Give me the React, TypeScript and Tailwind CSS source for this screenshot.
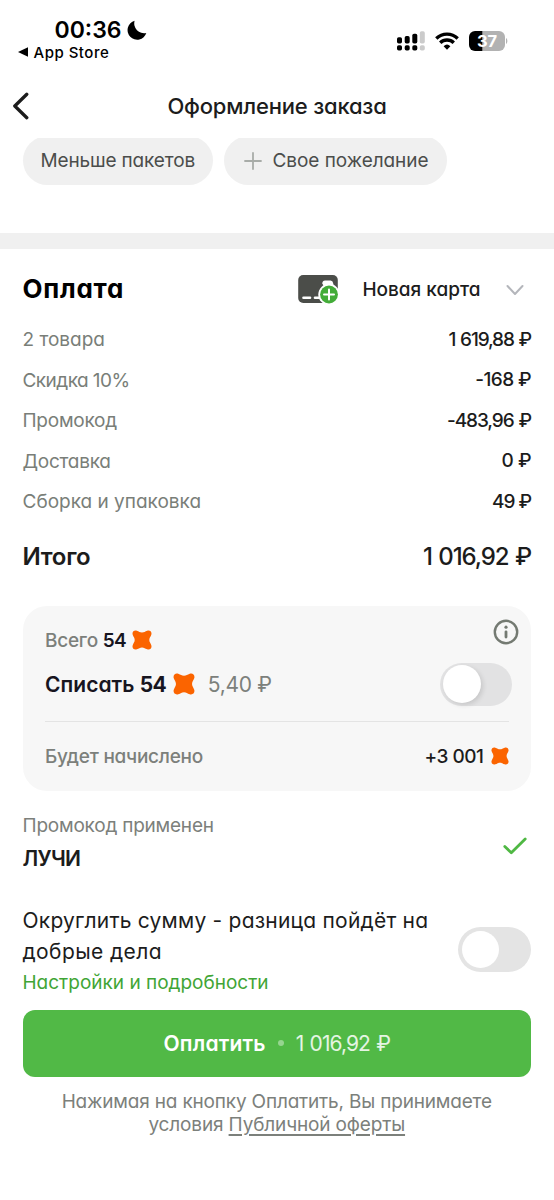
import type { ReactNode } from 'react';

type TextProps = { className?: string; children: ReactNode };

function Text({ className = '', children }: TextProps) {
  return <span className={`whitespace-pre ${className}`}>{children}</span>;
}

function Star({ className = '' }: { className?: string }) {
  return (
    <svg viewBox="0 0 20 20" className={`shrink-0 ${className}`} fill="#fb6400">
      <path d="M0.7 4.8C-0.2 2 2 -0.2 4.8 0.7C7 1.400 7.800 2.500 10 2.500S13 1.400 15.200 0.700C18 -0.200 20.200 2 19.300 4.800C18.600 7 17.300 7.800 17.300 10S18.600 13 19.300 15.200C20.200 18 18 20.200 15.200 19.300C13 18.600 12.200 17.400 10 17.400S7 18.600 4.800 19.300C2 20.200 -0.200 18 0.700 15.200C1.400 13 2.700 12.200 2.700 10S1.400 7 0.700 4.800Z" />
    </svg>
  );
}

function StatusBar() {
  return (
    <header className="flex h-[81px] items-start justify-between">
      <div className="flex flex-col pt-[18px] pl-[18px]">
        <div className="flex h-[25px] items-center pl-[36.5px] text-[23px] leading-none font-semibold text-black">
          <Text>00:36</Text>
          <svg viewBox="0 0 20 20" className="mb-[2px] ml-[5px] size-[20px]" fill="#000">
            <path d="M7.6 0.8A9.6 9.6 0 1 0 19.3 13A9.800 9.800 0 0 1 7.600 0.800Z" />
          </svg>
        </div>
        <div className="flex h-[18px] items-center text-[15px] leading-none font-medium text-black">
          <svg viewBox="0 0 10 10" className="mr-[5.5px] size-[10px]">
            <path d="M0 5L10 0.3V9.7Z" />
          </svg>
          <Text className="tracking-[0.5px]">App Store</Text>
        </div>
      </div>
      <div className="flex items-center pt-[31px] pr-[46px]">
        <svg viewBox="0 0 28 20" className="h-[20px] w-[28px]">
          <g fill="#000">
            <rect x="0" y="6.3" width="5" height="6.2" rx="1.7" />
            <rect x="7.7" y="5" width="5" height="7.5" rx="1.7" />
            <rect x="15.3" y="2.7" width="5" height="9.8" rx="1.7" />
            <rect x="0" y="14.3" width="5" height="5.2" rx="1.7" />
            <rect x="7.7" y="14.3" width="5" height="5.2" rx="1.7" />
            <rect x="15.3" y="14.3" width="5" height="5.2" rx="1.7" />
          </g>
          <g fill="#cbcbcb">
            <rect x="22.8" y="0.3" width="5" height="12.2" rx="1.7" />
            <rect x="22.8" y="14.3" width="5" height="5.2" rx="1.7" />
          </g>
        </svg>
        <svg viewBox="0 0 24 18" className="ml-[10px] h-[18px] w-[24px]" fill="none" stroke="#000" strokeWidth="3.4">
          <path d="M1.3 6.4A15.5 15.5 0 0 1 22.7 6.4" />
          <path d="M5.2 10.7A9.8 9.8 0 0 1 18.8 10.7" />
          <path d="M8.6 14.2A5 5 0 0 1 15.4 14.2L12 17.7Z" fill="#000" stroke="none" />
        </svg>
        <svg viewBox="0 0 39 20" className="ml-[10px] h-[20px] w-[39px]">
          <path d="M6 0H13.6V20H6A6 6 0 0 1 0 14V6A6 6 0 0 1 6 0Z" fill="#000" />
          <path d="M13.6 0H30A6 6 0 0 1 36 6V14A6 6 0 0 1 30 20H13.6Z" fill="#b2b2b2" />
          <path d="M37 7C38.8 8 38.8 12 37 13Z" fill="#b2b2b2" />
          <text x="18" y="15.8" textAnchor="middle" fill="#fff" fontSize="16.5" fontWeight="700">37</text>
        </svg>
      </div>
    </header>
  );
}

function TitleBar() {
  return (
    <div className="grid h-[56.5px] grid-cols-[40px_1fr_40px] items-center pb-[6px]">
      <svg viewBox="0 0 18 28" className="ml-[12px] h-[28px] w-[18px]" fill="none" stroke="#1c1c1c" strokeWidth="3.3" strokeLinecap="round" strokeLinejoin="round">
        <path d="M14.8 2.3L2.8 14L14.8 25.7" />
      </svg>
      <h1 className="text-center text-[22px] leading-none font-medium text-[#1c1c1c]">
        <Text className="tracking-[-0.2px]">Оформление заказа</Text>
      </h1>
    </div>
  );
}

function Wishes() {
  return (
    <div className="h-[95px] overflow-hidden">
      <div className="mt-[-1.5px] flex gap-[11px] pl-[22.5px] text-[19px] leading-none text-[#4b4d4b]">
        <div className="flex h-[49px] w-[190.5px] items-center justify-center rounded-full bg-[#f0f0f0]">
          <Text className="tracking-[-0.15px]">Меньше пакетов</Text>
        </div>
        <div className="flex h-[49px] w-[223px] items-center rounded-full bg-[#f0f0f0] pl-[20px]">
          <svg viewBox="0 0 18 18" className="mr-[10.5px] size-[18px]" stroke="#a8aca8" strokeWidth="1.8" strokeLinecap="round">
            <path d="M9 1V17M1 9H17" />
          </svg>
          <Text className="tracking-[-0.05px]">Свое пожелание</Text>
        </div>
      </div>
    </div>
  );
}

function PaymentHeader() {
  return (
    <div className="flex h-[80px] items-center">
      <h2 className="flex-1 text-[26px] leading-none font-bold text-black">
        <Text className="tracking-[0.75px]">Оплата</Text>
      </h2>
      <svg viewBox="0 0 42 30" className="h-[30px] w-[42px]">
        <rect x="1.2" y="1" width="39.6" height="28" rx="5" fill="#4b4d49" />
        <path d="M6.5 23.8H13" stroke="#fff" strokeWidth="2.6" strokeLinecap="round" />
        <path d="M18 23.8H23" stroke="#fff" strokeWidth="2.6" strokeLinecap="round" />
        <path d="M25.2 9.500Q25.500 6.500 28 6.500H33.500Q35.800 6.500 36.100 9L36.600 11.500L28 14Z" fill="#fff" />
        <circle cx="32" cy="20.5" r="10.7" fill="#fff" />
        <circle cx="32" cy="20.5" r="8.9" fill="#43ac38" />
        <path d="M32 15.5V25.5M27 20.5H37" stroke="#fff" strokeWidth="2" strokeLinecap="round" />
      </svg>
      <Text className="ml-[23px] text-[19px] leading-none font-medium text-[#1c1c1c]">Новая карта</Text>
      <svg viewBox="0 0 18 12" className="mt-[2px] mr-[7.5px] ml-[25px] h-[12px] w-[18px]" fill="none" stroke="#b4b6bb" strokeWidth="2" strokeLinecap="round" strokeLinejoin="round">
        <path d="M1.5 2L9 10L16.5 2" />
      </svg>
    </div>
  );
}

const lines = [
  { label: '2 товара', labelClass: '', value: '1 619,88 ₽', valueClass: 'tracking-[-1.15px] [word-spacing:0.9px]' },
  { label: 'Скидка 10%', labelClass: 'tracking-[-0.55px]', value: '-168 ₽', valueClass: 'tracking-[-0.6px]' },
  { label: 'Промокод', labelClass: 'tracking-[-0.25px]', value: '-483,96 ₽', valueClass: 'tracking-[-1.1px] [word-spacing:1px]' },
  { label: 'Доставка', labelClass: 'tracking-[-0.25px]', value: '0 ₽', valueClass: 'tracking-[-0.5px]' },
  { label: 'Сборка и упаковка', labelClass: '', value: '49 ₽', valueClass: 'tracking-[-1px]' },
];

function Summary() {
  return (
    <>
      <dl className="text-[19px] leading-none">
        {lines.map((line) => (
          <div key={line.label} className="flex h-[40.5px] items-center justify-between">
            <dt className="text-[#797e78]">
              <Text className={line.labelClass}>{line.label}</Text>
            </dt>
            <dd className="pb-px font-medium text-[#1c1c1c]">
              <Text className={line.valueClass}>{line.value}</Text>
            </dd>
          </div>
        ))}
      </dl>
      <div className="flex h-[83.5px] items-center justify-between pb-[13px] text-[24px] leading-none text-[#1c1c1c]">
        <Text className="font-semibold tracking-[-0.3px]">Итого</Text>
        <Text className="font-medium tracking-[-1.1px] [word-spacing:1.2px]">1 016,92 ₽</Text>
      </div>
    </>
  );
}

function Bonuses() {
  return (
    <section className="flex h-[185px] flex-col rounded-[24px] bg-[#f7f7f7] pl-[22.5px]">
      <div className="flex h-[57px] items-center justify-between pt-[11px] pr-[12.5px] text-[19px] leading-none">
        <div className="flex items-center pt-[2px]">
          <Text className="font-medium tracking-[-0.25px] text-[#7c807b]">Всего </Text>
          <Text className="font-semibold tracking-[-0.5px] text-[#17151f]">54</Text>
          <Star className="mb-px ml-[5.5px] size-[20px]" />
        </div>
        <svg viewBox="0 0 26 26" className="mb-[16px] size-[26px]" fill="none" stroke="#747a72" strokeWidth="2.4">
          <circle cx="13" cy="13" r="11.2" />
          <path d="M13 12.8V18" strokeWidth="2.8" strokeLinecap="round" />
          <circle cx="13" cy="8.2" r="1.6" fill="#747a72" stroke="none" />
        </svg>
      </div>
      <div className="mr-[22px] flex h-[59px] items-center border-b border-[#e4e4e4] pb-[14px] text-[21px] leading-none">
        <Text className="font-semibold tracking-[0.05px] text-[#17151f]">Списать </Text>
        <Text className="font-bold tracking-[-0.8px] text-[#17151f]">54</Text>
        <Star className="mb-px ml-[7px] size-[22px]" />
        <Text className="ml-[13px] tracking-[-0.3px] text-[#7c807b]">5,40 ₽</Text>
        <div className="mr-[-3px] mb-px ml-auto flex h-[43px] w-[72px] shrink-0 items-center rounded-full bg-[#e2e2e3] pl-[2.5px]">
          <div className="size-[38px] rounded-full bg-white shadow-[2px_2px_5px_rgba(0,0,0,0.12)]" />
        </div>
      </div>
      <div className="mr-[22px] flex h-[69px] items-center pt-px text-[19px] leading-none font-medium">
        <Text className="flex-1 tracking-[-0.25px] text-[#7c807b]">Будет начислено</Text>
        <Text className="tracking-[-0.5px] text-[#1c1c1c]">+3 001</Text>
        <Star className="mr-[0.5px] mb-px ml-[7px] size-[18px]" />
      </div>
    </section>
  );
}

function Promo() {
  return (
    <div className="flex h-[112px] items-start justify-between pt-[18px] leading-none">
      <div className="flex flex-col pt-[0.5px]">
        <div className="flex h-[33px] items-center text-[19px] text-[#7c807b]">
          <Text className="tracking-[-0.22px]">Промокод применен</Text>
        </div>
        <div className="flex h-[33px] items-center text-[21px] font-semibold text-[#1c1c1c]">
          <Text className="tracking-[-0.7px]">ЛУЧИ</Text>
        </div>
      </div>
      <svg viewBox="0 0 24 18" className="mt-[28px] mr-[4.5px] h-[18px] w-[24px]" fill="none" stroke="#4fb843" strokeWidth="2.8" strokeLinecap="round" strokeLinejoin="round">
        <path d="M1.8 9.5L8.3 15.8L22.2 2" />
      </svg>
    </div>
  );
}

function RoundUp() {
  return (
    <div className="flex h-[107px] justify-between">
      <div className="flex flex-col pt-px text-[21px] leading-none text-[#1c1c1c]">
        <div className="flex h-[32px] items-center pt-[2px]">
          <Text className="tracking-[0.22px]">Округлить сумму - разница пойдёт на</Text>
        </div>
        <div className="flex h-[32px] items-center">
          <Text className="tracking-[0.4px]">добрые дела</Text>
        </div>
        <div className="flex h-[30px] items-center text-[19px] text-[#3fa535]">
          <Text>Настройки и подробности</Text>
        </div>
      </div>
      <div className="mt-[24px] flex h-[45px] w-[73px] shrink-0 items-center rounded-full bg-[#e4e4e4] pl-[4px]">
        <div className="size-[37px] rounded-full bg-white" />
      </div>
    </div>
  );
}

function PayFooter() {
  return (
    <>
      <button className="flex h-[67.5px] w-full items-center justify-center rounded-[12px] bg-[#51b946] text-[21px] leading-none text-white">
        <Text className="font-semibold tracking-[0.2px]">Оплатить</Text>
        <span className="mr-[12px] ml-[12px] size-[6px] rounded-full bg-white/40" />
        <Text className="tracking-[-0.9px] [word-spacing:1.2px] text-white/85">1 016,92 ₽</Text>
      </button>
      <p className="flex flex-col items-center pt-[13px] text-[19px] leading-[23px] text-[#7c807b]">
        <Text className="tracking-[-0.18px]">Нажимая на кнопку Оплатить, Вы принимаете</Text>
        <Text className="tracking-[-0.15px]">
          условия <a className="underline decoration-[1.5px] underline-offset-[3px]">Публичной оферты</a>
        </Text>
      </p>
    </>
  );
}

export default function App() {
  return (
    <div className="h-[1200px] w-[554px] overflow-hidden bg-white font-['Inter','Noto_Sans',sans-serif] [font-feature-settings:'cv11']">
      <StatusBar />
      <TitleBar />
      <Wishes />
      <div className="h-[16.5px] bg-[#f0f0f0]" />
      <main className="pr-[23px] pl-[22.5px]">
        <PaymentHeader />
        <div className="mt-[-9.5px]">
          <Summary />
        </div>
        <Bonuses />
        <Promo />
        <RoundUp />
        <PayFooter />
      </main>
    </div>
  );
}
